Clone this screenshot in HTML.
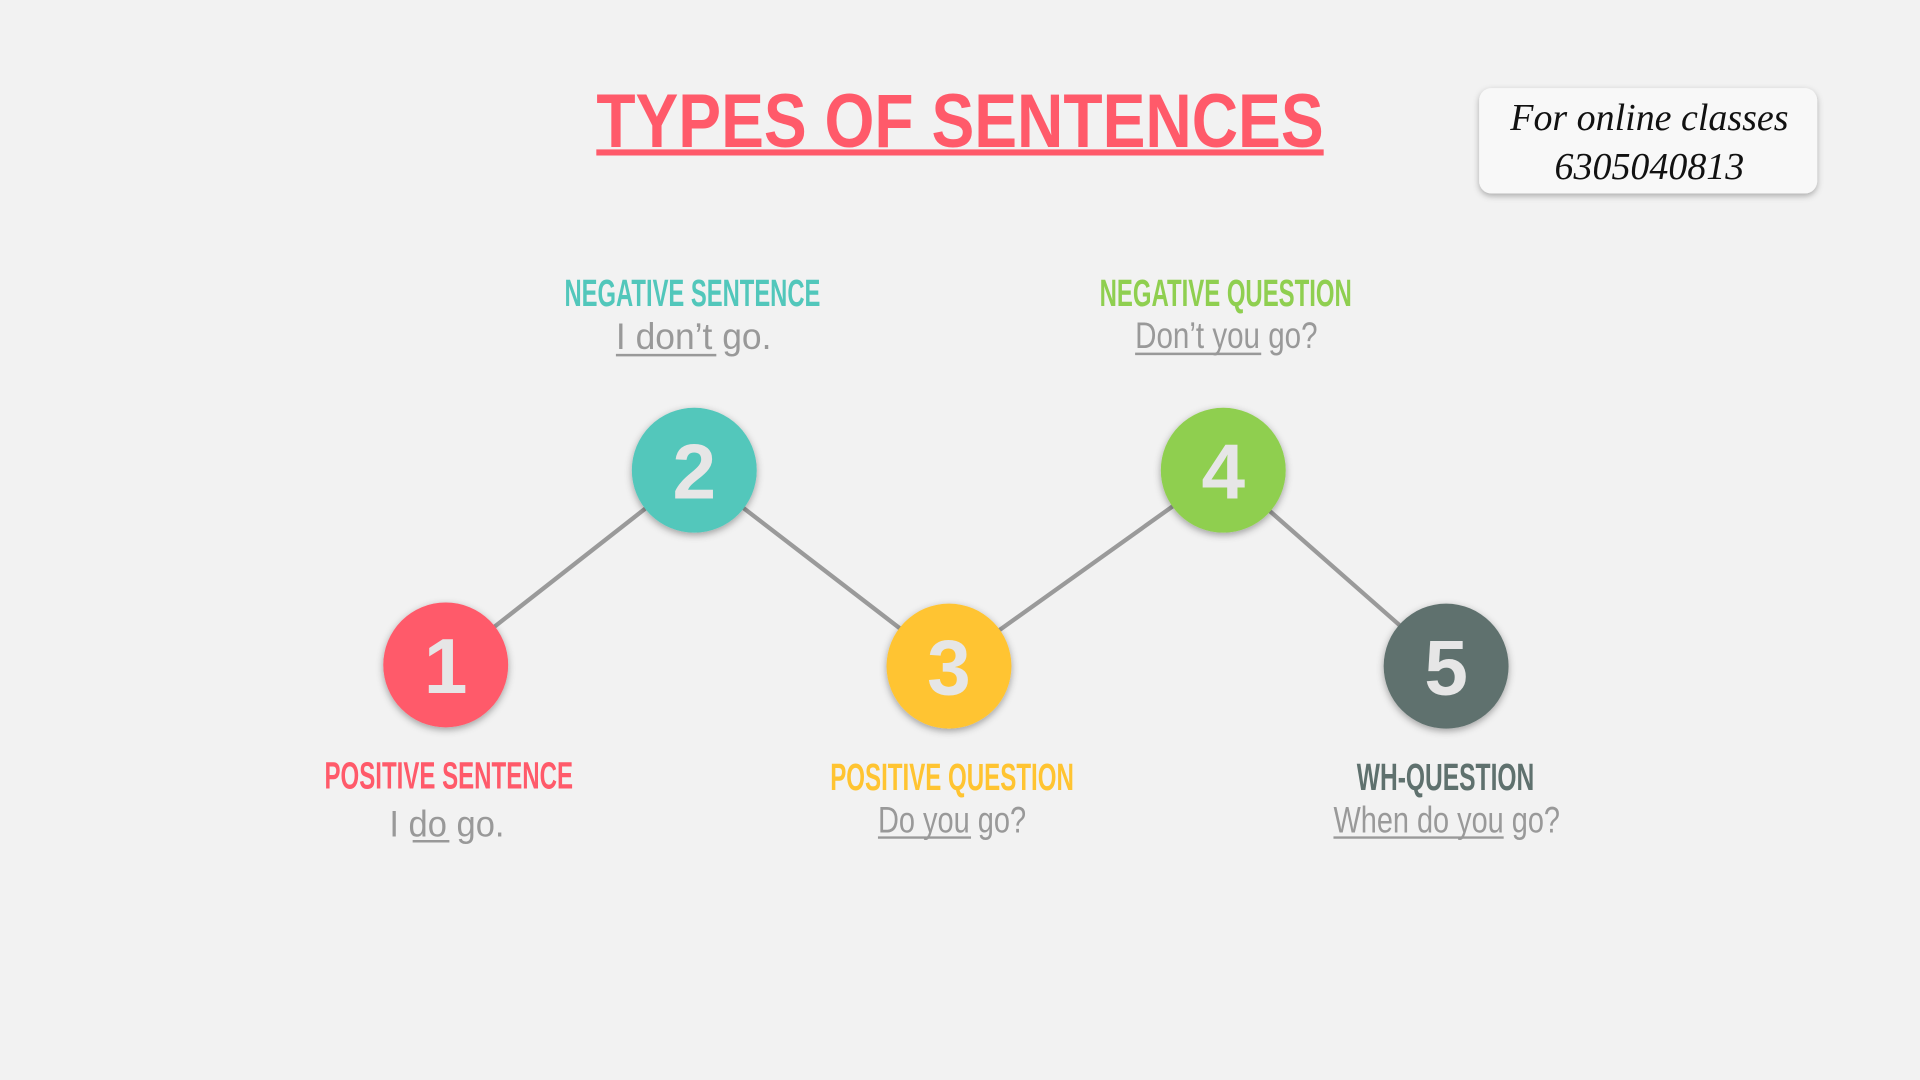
<!DOCTYPE html>
<html><head><meta charset="utf-8"><style>
html,body{margin:0;padding:0;background:#f2f2f2;overflow:hidden}
svg{display:block}
</style></head><body>
<svg width="1920" height="1080" viewBox="0 0 1568 882" xmlns="http://www.w3.org/2000/svg">
<defs>
<filter id="sh" x="-30%" y="-30%" width="160%" height="160%"><feDropShadow dx="0" dy="2" stdDeviation="3" flood-color="#000" flood-opacity="0.35"/></filter>
<filter id="bs" x="-10%" y="-20%" width="120%" height="140%"><feDropShadow dx="0" dy="2" stdDeviation="2.5" flood-color="#000" flood-opacity="0.3"/></filter>
</defs>
<rect width="1568" height="882" fill="#f2f2f2"/>
<text x="487" y="120" font-family="Liberation Sans, sans-serif" font-weight="bold" font-size="62" fill="#ff5a6a" textLength="594" lengthAdjust="spacingAndGlyphs">TYPES OF SENTENCES</text>
<rect x="487" y="122" width="594" height="5" fill="#ff5a6a"/>
<rect x="1208" y="72" width="276" height="86" rx="10" fill="#f8f8f8" filter="url(#bs)"/>
<g font-family="Liberation Serif, serif" font-style="italic" font-size="31" fill="#111" text-anchor="middle">
<text x="1347" y="106">For online classes</text>
<text x="1347" y="146">6305040813</text>
</g>
<polyline points="364,543 567,384 775,544 999,384 1181,544" fill="none" stroke="#9a9a9a" stroke-width="3.5"/>
<g filter="url(#sh)">
<circle cx="364" cy="543" r="51" fill="#ff5a6a"/>
<circle cx="567" cy="384" r="51" fill="#52c7bb"/>
<circle cx="775" cy="544" r="51" fill="#ffc431"/>
<circle cx="999" cy="384" r="51" fill="#8fcf50"/>
<circle cx="1181" cy="544" r="51" fill="#5f716e"/>
</g>
<g font-family="Liberation Sans, sans-serif" font-weight="bold" font-size="64" fill="#e6e6e6" text-anchor="middle">
<text x="364" y="566">1</text>
<text x="567" y="407">2</text>
<text x="775" y="567">3</text>
<text x="999" y="407">4</text>
<text x="1181" y="567">5</text>
</g>
<g font-family="Liberation Sans Narrow, Liberation Sans, sans-serif" font-weight="bold" font-size="31" lengthAdjust="spacingAndGlyphs">
<text x="461" y="250" fill="#52c7bb" textLength="209" lengthAdjust="spacingAndGlyphs">NEGATIVE SENTENCE</text>
<text x="898" y="250" fill="#8fcf50" textLength="206" lengthAdjust="spacingAndGlyphs">NEGATIVE QUESTION</text>
<text x="265" y="644" fill="#ff5a6a" textLength="203" lengthAdjust="spacingAndGlyphs">POSITIVE SENTENCE</text>
<text x="678" y="645" fill="#ffc431" textLength="199" lengthAdjust="spacingAndGlyphs">POSITIVE QUESTION</text>
<text x="1108" y="645" fill="#5f716e" textLength="145" lengthAdjust="spacingAndGlyphs">WH-QUESTION</text>
</g>
<g font-family="Liberation Sans Narrow, Liberation Sans, sans-serif" font-size="30" fill="#999">
<text x="503" y="285" textLength="127" lengthAdjust="spacingAndGlyphs">I don’t go.</text>
<text x="927" y="284" textLength="149" lengthAdjust="spacingAndGlyphs">Don’t you go?</text>
<text x="318" y="683" textLength="94" lengthAdjust="spacingAndGlyphs">I do go.</text>
<text x="717" y="680" textLength="121" lengthAdjust="spacingAndGlyphs">Do you go?</text>
<text x="1089" y="680" textLength="185" lengthAdjust="spacingAndGlyphs">When do you go?</text>
</g>
<g stroke="#999" stroke-width="2">
<line x1="503" y1="290" x2="585" y2="290"/>
<line x1="927" y1="289" x2="1030" y2="289"/>
<line x1="337" y1="687" x2="367" y2="687"/>
<line x1="717" y1="684" x2="793" y2="684"/>
<line x1="1089" y1="684" x2="1228" y2="684"/>
</g>
</svg>
</body></html>
